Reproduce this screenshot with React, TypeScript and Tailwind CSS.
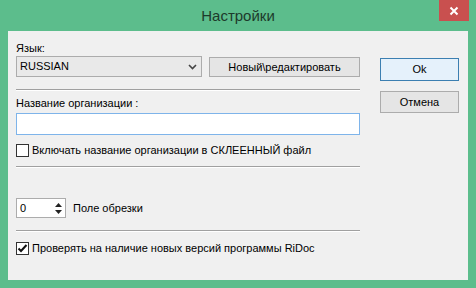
import React from "react";

function Checkbox({ checked }: { checked?: boolean }) {
  return (
    <div className="w-[13px] h-[13px] border border-[#333] bg-white flex items-center justify-center shrink-0">
      {checked && (
        <svg width="11" height="11" viewBox="0 0 11 11">
          <path d="M1.5 5.5 L4 8 L9.5 2" stroke="#111" strokeWidth="2" fill="none" />
        </svg>
      )}
    </div>
  );
}

function Sep() {
  return <div className="h-[2px] w-[344px] border-t border-[#a0a0a0] border-b-white border-b" />;
}

export default function App() {
  return (
    <div
      className="w-[476px] h-[288px] bg-[#5cbd8c] flex flex-col text-[11px] text-black"
      style={{ fontFamily: '"Liberation Sans", Arial, sans-serif' }}
    >
      <div className="h-[31px] relative flex items-center justify-center">
        <span className="text-[15px] text-[#1d3a2b] mt-[2px]">Настройки</span>
        <div className="absolute right-[7px] top-0 w-[30px] h-[21px] bg-[#c9504f] flex items-center justify-center">
          <svg width="10" height="10" viewBox="0 0 10 10">
            <path d="M1.5 1.5 L8.5 8.5 M8.5 1.5 L1.5 8.5" stroke="white" strokeWidth="2" />
          </svg>
        </div>
      </div>
      <div className="mx-[8px] h-[249px] bg-[#f0f0f0] flex pl-[8px]">
        <div className="w-[344px] flex flex-col">
          <div className="mt-[10px] h-[14px] leading-[14px]">Язык:</div>
          <div className="mt-[1px] flex items-start">
            <div className="w-[186px] h-[21px] border border-[#acacac] bg-[#e9e9e9] flex items-center pl-[3px]">
              <span className="flex-1">RUSSIAN</span>
              <div className="w-[17px] h-full flex items-center justify-center">
                <svg width="9" height="6" viewBox="0 0 9 6">
                  <path d="M1 1 L4.5 4.5 L8 1" stroke="#444" strokeWidth="1.6" fill="none" />
                </svg>
              </div>
            </div>
            <div className="ml-[7px] mt-[1px] w-[151px] h-[20px] border border-[#acacac] bg-[#e5e5e5] flex items-center justify-center">
              Новый\редактировать
            </div>
          </div>
          <div className="mt-[12px]">
            <Sep />
          </div>
          <div className="mt-[5px] h-[14px] leading-[14px]">Название организации :</div>
          <div className="mt-[3px] w-[344px] h-[22px] border border-[#7eb4ea] bg-white" />
          <div className="mt-[9px] flex items-center h-[13px]">
            <Checkbox />
            <span className="ml-[3px]">Включать название организации в СКЛЕЕННЫЙ файл</span>
          </div>
          <div className="mt-[9px]">
            <Sep />
          </div>
          <div className="mt-[30px] flex items-center">
            <div className="w-[50px] h-[20px] border border-[#acacac] bg-white flex items-center">
              <span className="ml-[3px] flex-1">0</span>
              <div className="w-[12px] h-full flex flex-col items-center justify-center gap-[3px] mr-[1px]">
                <svg width="7" height="4" viewBox="0 0 7 4">
                  <path d="M0 4 L3.5 0 L7 4 Z" fill="#222" />
                </svg>
                <svg width="7" height="4" viewBox="0 0 7 4">
                  <path d="M0 0 L3.5 4 L7 0 Z" fill="#222" />
                </svg>
              </div>
            </div>
            <span className="ml-[7px]">Поле обрезки</span>
          </div>
          <div className="mt-[12px]">
            <Sep />
          </div>
          <div className="mt-[10px] flex items-center h-[13px]">
            <Checkbox checked />
            <span className="ml-[3px]">Проверять на наличие новых версий программы RiDoc</span>
          </div>
        </div>
        <div className="ml-[20px] flex flex-col">
          <div className="mt-[27px] w-[79px] h-[23px] border border-[#3c7fb1] bg-[#e5f1fb] flex items-center justify-center">
            Ok
          </div>
          <div className="mt-[10px] w-[79px] h-[22px] border border-[#acacac] bg-[#e5e5e5] flex items-center justify-center">
            Отмена
          </div>
        </div>
      </div>
    </div>
  );
}
